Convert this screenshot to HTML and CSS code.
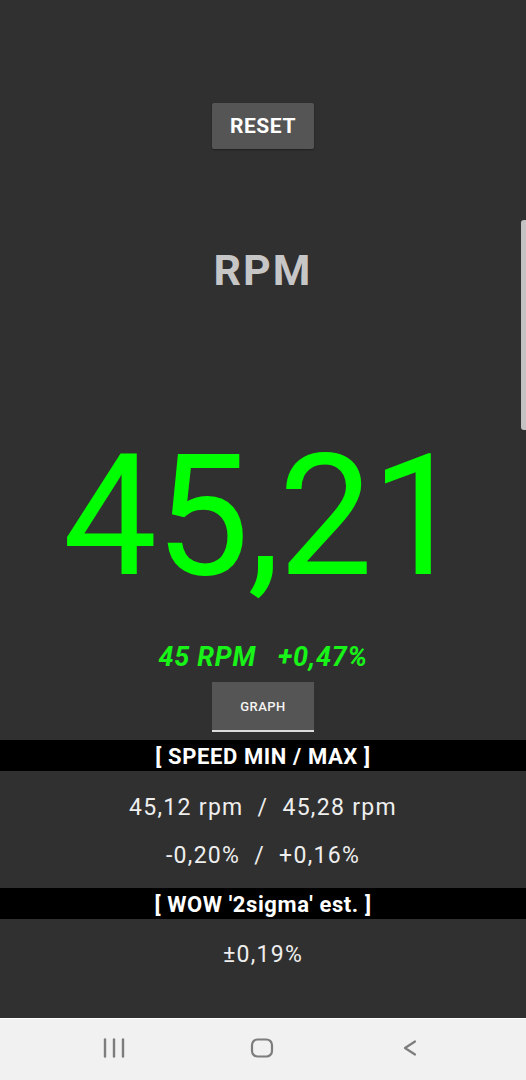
FILE: index.html
```html
<!DOCTYPE html>
<html>
<head>
<meta charset="utf-8">
<link rel="stylesheet" href="styles.css">
</head>
<body>
<div class="screen">
  <main class="content">
    <button class="btn btn-reset">RESET</button>
    <h1 class="label">RPM</h1>
    <div class="speed">45,21</div>
    <div class="sub">45 RPM&nbsp;&nbsp;&nbsp;+0,47%</div>
    <button class="btn btn-graph">GRAPH</button>
    <div class="section-head head-1">[ SPEED MIN / MAX ]</div>
    <div class="value v1">45,12 rpm&nbsp;&nbsp;/&nbsp;&nbsp;45,28 rpm</div>
    <div class="value v2">-0,20%&nbsp;&nbsp;/&nbsp;&nbsp;+0,16%</div>
    <div class="section-head head-2">[ WOW '2sigma' est. ]</div>
    <div class="value v3">±0,19%</div>
    <div class="scroll-thumb"></div>
  </main>
  <nav class="navbar">
    <svg class="nav-icon" width="24" height="24" viewBox="0 0 24 24">
      <g stroke="#7d7d7d" stroke-width="2.4" stroke-linecap="round">
        <line x1="3" y1="3.5" x2="3" y2="20.5"/>
        <line x1="12" y1="3.5" x2="12" y2="20.5"/>
        <line x1="21" y1="3.5" x2="21" y2="20.5"/>
      </g>
    </svg>
    <svg class="nav-icon" width="24" height="24" viewBox="0 0 24 24">
      <rect x="2" y="3.5" width="20" height="17" rx="5.5" fill="none" stroke="#7d7d7d" stroke-width="2.2"/>
    </svg>
    <svg class="nav-icon" width="24" height="24" viewBox="0 0 24 24">
      <polyline points="17,5.5 7,12 17,18.5" fill="none" stroke="#7d7d7d" stroke-width="2.2" stroke-linecap="round" stroke-linejoin="round"/>
    </svg>
  </nav>
</div>
</body>
</html>
```

FILE: styles.css
```css
* { box-sizing: border-box; }
html, body {
  margin: 0;
  padding: 0;
  background: #303030;
  font-family: Roboto, "Liberation Sans", sans-serif;
}
.screen {
  width: 526px;
  height: 1080px;
  display: flex;
  flex-direction: column;
  overflow: hidden;
}
.content {
  position: relative;
  height: 1018px;
  background: #303030;
  display: flex;
  flex-direction: column;
  align-items: center;
  padding-top: 103px;
}
.btn {
  border: none;
  background: #555555;
  color: #ffffff;
  font-family: Roboto, "Liberation Sans", sans-serif;
  width: 102px;
  padding: 0;
  border-radius: 2px;
}
.btn-reset {
  height: 46px;
  font-size: 21px;
  font-weight: 700;
  letter-spacing: 0.6px;
  box-shadow: 0 1px 2px rgba(0,0,0,0.35);
}
.label {
  margin: 100px 0 0;
  font-size: 43px;
  line-height: 43px;
  font-weight: 700;
  color: #c6c6c6;
  letter-spacing: 2px;
}
.speed {
  margin-top: 141px;
  font-size: 168px;
  line-height: 168px;
  color: #00ff00;
  letter-spacing: -2px;
}
.sub {
  margin-top: 43px;
  font-size: 27px;
  line-height: 27px;
  font-weight: 700;
  font-style: italic;
  color: #18f418;
  letter-spacing: 0.7px;
}
.btn-graph {
  margin-top: 11px;
  height: 50px;
  font-size: 13px;
  font-weight: 500;
  letter-spacing: 0.5px;
  border-bottom: 2px solid #dcdcdc;
  border-radius: 0;
  color: #f4f4f4;
}
.section-head {
  align-self: stretch;
  height: 31px;
  background: #000000;
  color: #ffffff;
  font-size: 22px;
  font-weight: 700;
  text-align: center;
  line-height: 29px;
  padding-top: 2px;
  letter-spacing: 0.6px;
}
.head-1 { margin-top: 8px; }
.head-2 { margin-top: 21px; }
.value {
  font-size: 23px;
  line-height: 23px;
  color: #eeeeee;
  letter-spacing: 1.3px;
}
.v1 { margin-top: 25px; }
.v2 { margin-top: 25px; }
.v3 { margin-top: 24px; }
.scroll-thumb {
  position: absolute;
  right: 0;
  top: 220px;
  width: 5px;
  height: 210px;
  background: #c2c2c2;
  border-radius: 3px 0 0 3px;
}
.navbar {
  height: 62px;
  background: #f1f1f1;
  border-top: 1px solid #ffffff;
  display: flex;
  justify-content: flex-start;
  align-items: center;
  gap: 124px;
  padding: 0 0 4px 102px;
}
.nav-icon { display: block; flex: none; }
```
